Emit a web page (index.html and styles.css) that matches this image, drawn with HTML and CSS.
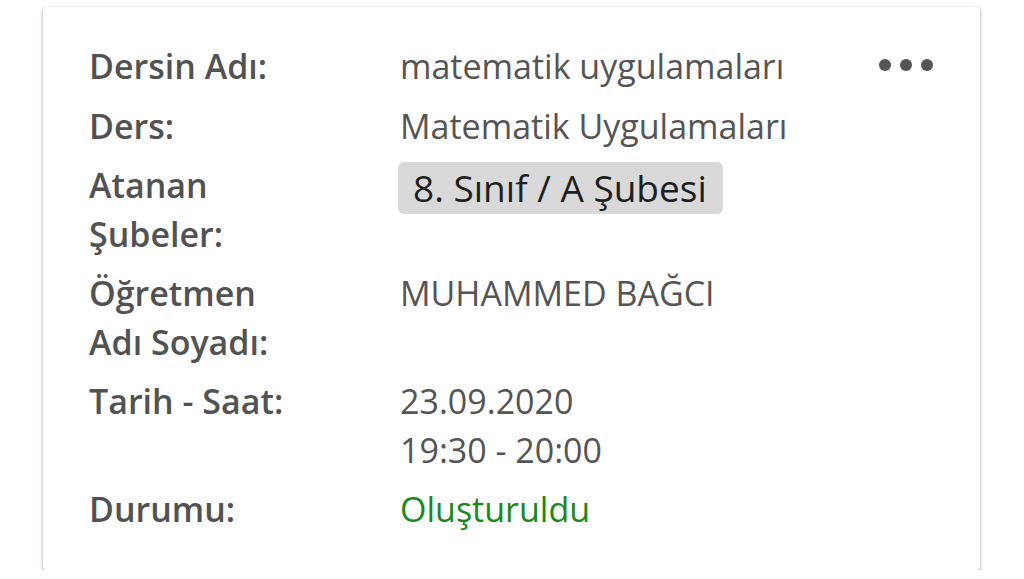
FILE: index.html
```html
<!DOCTYPE html>
<html lang="tr">
<head>
<meta charset="utf-8">
<link rel="stylesheet" href="styles.css">
</head>
<body>
<div class="card">
  <div class="more"><span></span><span></span><span></span></div>
  <div class="grid">
    <div class="label">Dersin Adı:</div>
    <div class="value">matematik uygulamaları</div>
    <div class="label">Ders:</div>
    <div class="value">Matematik Uygulamaları</div>
    <div class="label">Atanan<br>Şubeler:</div>
    <div class="value"><span class="badge">8. Sınıf / A Şubesi</span></div>
    <div class="label">Öğretmen<br>Adı Soyadı:</div>
    <div class="value">MUHAMMED BAĞCI</div>
    <div class="label">Tarih - Saat:</div>
    <div class="value">23.09.2020<br>19:30 - 20:00</div>
    <div class="label">Durumu:</div>
    <div class="value status">Oluşturuldu</div>
  </div>
</div>
</body>
</html>
```
FILE: styles.css
```css
html, body {
  margin: 0;
  padding: 0;
  background: #fff;
}
body {
  font-family: "Open Sans", "Noto Sans", sans-serif;
  padding: 7px 44px 0 43px;
}
.card {
  position: relative;
  width: 937px;
  height: 563px;
  box-sizing: border-box;
  background: #fff;
  border-radius: 3px;
  box-shadow: 0 2px 4px rgba(0,0,0,0.3), 0 0 1px rgba(0,0,0,0.25);
  padding: 35px 40px 0 46px;
}
.grid {
  display: grid;
  grid-template-columns: 311px 1fr;
  row-gap: 11px;
  font-size: 34px;
  line-height: 48.5px;
  color: #555;
}
.label {
  font-weight: 600;
  color: #525252;
}
.value {
  font-weight: 400;
}
.badge {
  display: inline-block;
  background: #d9d9d9;
  color: #1e1e1e;
  border-radius: 6px;
  font-size: 37px;
  line-height: 52px;
  padding: 0 16px 0 15px;
  margin-left: -2px;
  margin-top: 1px;
}
.status {
  color: #178a17;
}
.more {
  position: absolute;
  top: 52px;
  right: 47px;
  display: flex;
  gap: 9px;
}
.more span {
  width: 12px;
  height: 12px;
  border-radius: 50%;
  background: #555;
}
```
